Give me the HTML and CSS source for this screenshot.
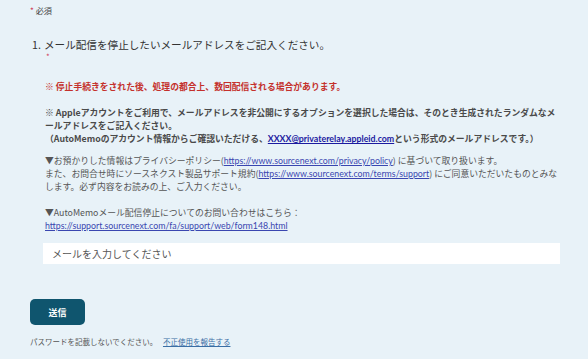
FILE: index.html
```html
<!DOCTYPE html>
<html lang="ja">
<head>
<meta charset="utf-8">
<link rel="stylesheet" href="styles.css">
</head>
<body>
<main class="page">
  <p class="required-note"><span class="star">*</span> 必須</p>

  <section class="question">
    <h2 class="q-title"><span class="q-num">1.</span>メール配信を停止したいメールアドレスをご記入ください。</h2>
    <div class="q-star">*</div>

    <div class="q-body">
      <p class="warn">※ 停止手続きをされた後、処理の都合上、数回配信される場合があります。</p>

      <p class="apple">※ Appleアカウントをご利用で、メールアドレスを非公開にするオプションを選択した場合は、そのとき生成されたランダムなメールアドレスをご記入ください。<br>（AutoMemoのアカウント情報からご確認いただける、<a class="relay" href="#">XXXX@privaterelay.appleid.com</a>という形式のメールアドレスです。）</p>

      <p class="info">▼お預かりした情報はプライバシーポリシー(<a href="#">https://www.sourcenext.com/privacy/policy</a>) に基づいて取り扱います。<br>また、お問合せ時にソースネクスト製品サポート規約(<a href="#">https://www.sourcenext.com/terms/support</a>) にご同意いただいたものとみなします。必ず内容をお読みの上、ご入力ください。</p>

      <p class="info contact">▼AutoMemoメール配信停止についてのお問い合わせはこちら：<br><a href="#">https://support.sourcenext.com/fa/support/web/form148.html</a></p>
    </div>

    <input class="mail-input" type="text" placeholder="メールを入力してください">
  </section>

  <button class="submit" type="button">送信</button>

  <p class="footer">パスワードを記載しないでください。 <a href="#">不正使用を報告する</a></p>
</main>
</body>
</html>
```

FILE: styles.css
```css
* { box-sizing: border-box; }
html, body {
  margin: 0;
  background: #e8f2f8;
}
body {
  font-family: "Noto Sans CJK JP", "Noto Sans", sans-serif;
  color: #4a4a4a;
}
.page {
  width: 588px;
  height: 359px;
  padding: 3px 0 0 30px;
  overflow: hidden;
}
p { margin: 0; }

.required-note {
  font-size: 8.2px;
  line-height: 14px;
  color: #444;
}
.star { color: #d0405a; }

.question {
  margin-top: 20px;
  width: 534px;
}
.q-title {
  margin: 0;
  font-size: 10.6px;
  font-weight: normal;
  line-height: 16px;
  color: #333;
  display: flex;
  padding-left: 2px;
}
.q-num { width: 12px; }
.q-star {
  color: #d0405a;
  font-size: 8px;
  line-height: 8px;
  padding-left: 16px;
}

.q-body {
  padding-left: 15px;
  font-size: 8.8px;
  line-height: 13px;
}
.q-body a {
  font-family: "Lato", "Noto Sans CJK JP", sans-serif;
}
.warn {
  margin-top: 19px;
  color: #c4302b;
  font-weight: bold;
}
.apple {
  margin-top: 13px;
  font-weight: bold;
  color: #4a4a4a;
}
.q-body a.relay {
  color: #1c1aa0;
  font-weight: bold;
}
.info {
  margin-top: 9px;
  color: #555;
}
.info.contact { margin-top: 13px; }
.info a {
  color: #3a46b0;
}

.mail-input {
  display: block;
  margin: 11px 0 0 13px;
  width: 517px;
  height: 21px;
  border: none;
  background: #fff;
  padding: 0 9px;
  font-family: inherit;
  font-size: 10px;
  color: #333;
  outline: none;
}
.mail-input::placeholder { color: #555; }

.submit {
  display: block;
  margin-top: 35px;
  width: 55px;
  height: 26px;
  border: none;
  border-radius: 5px;
  background: #0f556e;
  color: #fff;
  font-family: inherit;
  font-size: 9px;
  font-weight: bold;
  padding: 0;
}

.footer {
  margin-top: 11px;
  font-size: 7.5px;
  line-height: 12px;
  color: #555;
}
.footer a {
  margin-left: 4px;
  color: #3a6ea5;
}
```
